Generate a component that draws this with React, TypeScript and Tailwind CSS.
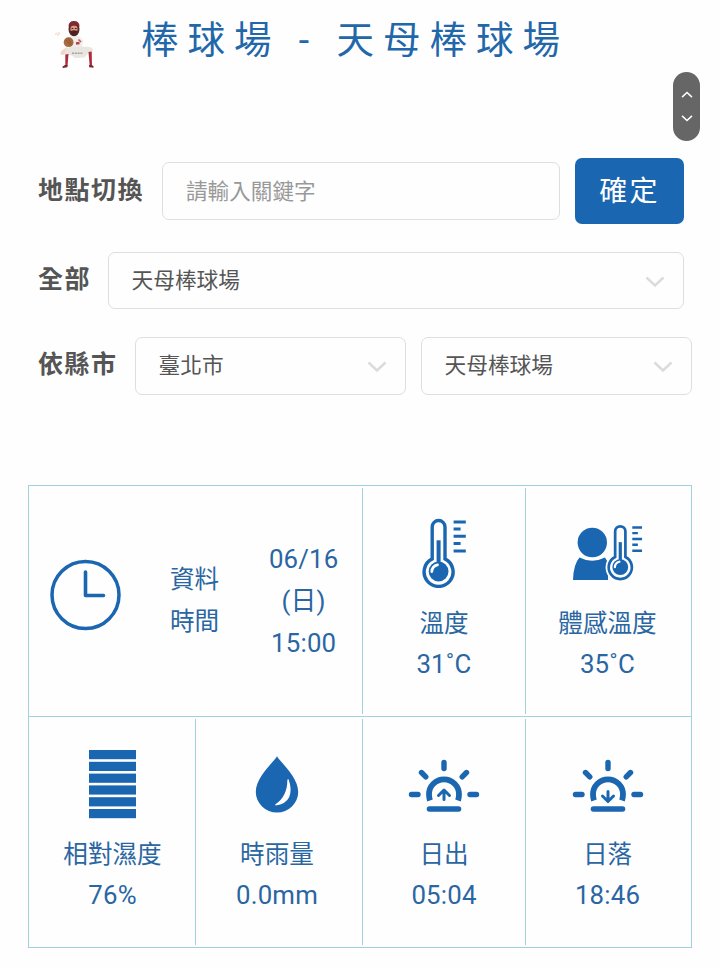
import clsx from "clsx";
import type { ReactNode } from "react";

const BLUE = "#1b66b1";

function Player() {
  return (
    <svg className="h-[52px] w-[44px]" viewBox="0 0 44 52">
      <path d="M1 15.500l2-1.500M4 13l2 2M3 16l2-.5" stroke="#f3dccb" strokeWidth="1.300" />
      <path d="M12.500 28l-5.500 4.500-.5 3 2.500.5 5-3z" fill="#f6d3c4" />
      <path d="M16 17.500l8-.5 3.500 4 .5 7-3 3H15.500l-1-6z" fill="#f0edea" />
      <path d="M24 18l3.500 4-.5 3.500-4 .5" fill="none" stroke="#efece9" strokeWidth="3" />
      <path d="M22 24.500l3.500-.5" stroke="#b4404a" strokeWidth="2.600" />
      <path d="M24.500 20.500l2.500 2.500" stroke="#c15a61" strokeWidth="1.600" />
      <path d="M12 29l10-1.500L36 28q3 1 3 4l-4.500 2-4 4.500-9 .5-5-3-5 .8q-1-4 .5-7.800z" fill="#e9e6e1" />
      <path d="M11.300 35.500l3.200-.5-1 12h-2.200zM34.500 33l3.200-.5.3 14.500h-2.300z" fill="#ad2b3b" />
      <path d="M10.800 46l3 .2-.5 2-4.500.8-.4-1.300zM35 46l3 0 1.700 1.400-.3 1.300-4.200-.5z" fill="#7b2833" />
      <path d="M18 34.200h11" stroke="#a5a09d" strokeWidth="1.600" strokeDasharray="2 .8" />
      <ellipse cx="20" cy="10" rx="5.500" ry="7.300" fill="#5e2826" />
      <ellipse cx="20" cy="10" rx="3.600" ry="3.400" fill="#dd9a80" />
      <path d="M14.500 7.500q0-5.500 5.500-5.500t5.500 5.500q-5.500-2.500-11 0" fill="#7e2c31" />
      <path d="M16.500 12q3.500-1.500 7 0l-1 4-2.500 1-2.500-1z" fill="#4a2422" />
      <path d="M17.500 9.500h1.800M20.900 9.500h1.800" stroke="#4a2422" strokeWidth="1" />
      <circle cx="14.600" cy="23.200" r="4.900" fill="#a76b3f" />
      <path d="M11.500 20.500l5.500 6M14 19l3.500 6" stroke="#855432" strokeWidth=".9" />
    </svg>
  );
}

function Chevron({ up, className }: { up?: boolean; className?: string }) {
  return (
    <svg className={className} viewBox="0 0 20 12" fill="none" stroke="currentColor">
      <path d={up ? "M1.5 10.5l8.5-8 8.5 8" : "M1.5 1.5l8.5 8 8.5-8"} strokeWidth="2.6" />
    </svg>
  );
}

function Select({ value, className }: { value: string; className?: string }) {
  return (
    <button
      className={clsx(
        "flex items-center justify-between rounded-[7px] border border-[#dedede] pr-[18px] pl-[22.5px] text-[21.7px] text-[#555]",
        className,
      )}
    >
      <span>{value}</span>
      <Chevron className="mt-[2px] h-[12px] w-[20px] text-[#dcdcdc]" />
    </button>
  );
}

function ClockIcon() {
  return (
    <svg className="size-[72px]" viewBox="0 0 72 72" fill="none" stroke={BLUE} strokeLinecap="round" strokeLinejoin="round">
      <circle cx="36.5" cy="36" r="33.5" strokeWidth="3.5" />
      <path d="M36.5 13v23.5h18" strokeWidth="3.6" />
    </svg>
  );
}

function Thermometer() {
  return (
    <>
      <path d="M10.2 40.9V8.9a6.4 6.4 0 0 1 12.8 0v32a14.5 14.5 0 1 1-12.8 0z" fill="none" stroke={BLUE} strokeWidth="3.4" />
      <circle cx="16.600" cy="53.500" r="9.900" fill={BLUE} />
      <path d="M16.600 22.300v24" stroke={BLUE} strokeWidth="4" />
      <path d="M9.800 53.500a7.400 7.400 0 0 1 5.700-6.700" fill="none" stroke="#fff" strokeWidth="2.800" strokeLinecap="round" />
      <path d="M31.600 4h12.200M31.600 11h7M31.600 18.300h12.200M31.600 25.500h7M31.600 33h12.200" stroke={BLUE} strokeWidth="3" />
    </>
  );
}

function TemperatureIcon() {
  return (
    <svg className="h-[70px] w-[44px]" viewBox="0 0 44 70">
      <Thermometer />
    </svg>
  );
}

function FeelsLikeIcon() {
  return (
    <svg className="h-[70px] w-[70px]" viewBox="0 0 70 70">
      <circle cx="19.3" cy="24.5" r="14.7" fill={BLUE} />
      <path d="M6.5 39.500q12.500 6.500 25.500 0l3 5v17.500H0Q.5 46 6.500 39.500z" fill={BLUE} />
      <g transform="translate(34 6.300) scale(.8)">
        <circle cx="16.600" cy="53.900" r="18.400" fill="#fefefe" />
        <Thermometer />
      </g>
    </svg>
  );
}

function HumidityIcon() {
  return (
    <svg className="h-[70px] w-[47px]" viewBox="0 0 47 70" fill={BLUE}>
      {[0, 1, 2, 3, 4, 5].map((i) => (
        <rect key={i} y={1 + i * 11.8} width="47" height="9.2" />
      ))}
    </svg>
  );
}

function RainIcon() {
  return (
    <svg className="h-[70px] w-[44px]" viewBox="0 0 44 70">
      <path d="M22 7.200C18 14 .8 28 .8 43a21.200 20.500 0 0 0 42.400 0C43.200 28 26 14 22 7.200z" fill={BLUE} />
      <path d="M33 30.500q7.500 22-12.500 25.500 12.500-8 12.500-25.500z" fill="#fff" stroke="#fff" strokeWidth="1.200" />
    </svg>
  );
}

function SunIcon({ down }: { down?: boolean }) {
  return (
    <svg className="h-[70px] w-[72px]" viewBox="0 0 72 70" fill="none" stroke={BLUE} strokeLinecap="round" strokeLinejoin="round">
      <path d="M36 13.500v6M13.500 23.500l4.300 4.300M58.500 23.500l-4.300 4.300M3.500 45.500h6.500M62 45.500h6.500M21.400 60h29.200" strokeWidth="5.400" />
      <path d="M22 51.500Q21 48.500 21 45.300a15 15 0 0 1 30 0Q51 48.500 50 51.500" strokeWidth="5.800" strokeLinecap="butt" />
      <path
        d={down ? "M36 42.500v9.500M30.500 47l5.500 5.500 5.500-5.500" : "M36 50.500v-9M30.500 46.500l5.500-5.500 5.500 5.500"}
        strokeWidth="3"
      />
    </svg>
  );
}

function Reading({ icon, label, value, className }: { icon: ReactNode; label: string; value: string; className?: string }) {
  return (
    <div className={clsx("my-[2px] flex flex-col items-center border-[#a2d1db] pt-[30px]", className)}>
      {icon}
      <span className="mt-[15px] text-[24.6px] leading-[42px]">{label}</span>
      <span className="-mt-[2px] text-[25.8px] leading-[42px] tracking-[0.2px]">{value}</span>
    </div>
  );
}

export default function App() {
  return (
    <main className="relative h-[967px] w-[720px] overflow-hidden bg-[#fefefe] font-[Roboto,'Noto_Sans_CJK_TC',sans-serif] text-[#555]">
      <header className="flex h-[80px] items-start pl-[54px]">
        <div className="mt-[19px] w-[87px]">
          <Player />
        </div>
        <h1 className="mt-[13px] text-[37.5px] leading-[54px] tracking-[9px] whitespace-nowrap text-[#2267a9]">
          棒球場 - 天母棒球場
        </h1>
      </header>

      <div className="absolute top-[72px] left-[673px] flex h-[69px] w-[27px] flex-col items-center justify-center gap-[17px] rounded-full bg-[#666] text-white">
        <Chevron up className="h-[7px] w-[12px]" />
        <Chevron className="h-[7px] w-[12px]" />
      </div>

      <form className="pt-[78px] pl-[38px]">
        <div className="flex h-[66px] items-center">
          <label className="-mt-px w-[124px] text-[25px] font-bold tracking-[1.5px] whitespace-nowrap">地點切換</label>
          <input
            className="h-[58px] w-[398px] rounded-[7px] border border-[#dedede] pt-px pl-[23px] text-[21.6px] placeholder:text-[#999]"
            placeholder="請輸入關鍵字"
          />
          <button
            type="button"
            className="ml-[15px] h-[66px] w-[109px] rounded-[7px] bg-[#1b66b1] pt-[2px] text-[28px] tracking-[2.3px] text-white"
          >
            確定
          </button>
        </div>

        <div className="mt-[28px] flex h-[57px] items-center">
          <label className="-mt-[2px] w-[70px] text-[25px] font-bold tracking-[1.5px] whitespace-nowrap">全部</label>
          <Select value="天母棒球場" className="h-[57px] w-[576px] pt-px" />
        </div>

        <div className="mt-[28px] flex h-[58px] items-center">
          <label className="-mt-[2px] w-[97px] text-[25px] font-bold tracking-[1.5px] whitespace-nowrap">依縣市</label>
          <Select value="臺北市" className="h-[58px] w-[271px]" />
          <Select value="天母棒球場" className="ml-[15px] h-[58px] w-[271px]" />
        </div>
      </form>

      <section className="mt-[90px] ml-[28px] h-[463px] w-[664px] border border-[#a2d1db] text-[#2a66a2]">
        <div className="grid h-[231px] grid-cols-[334px_163px_165px] border-b border-[#a2d1db]">
          <div className="my-[2px] flex items-center border-r border-[#a2d1db] pl-[20px]">
            <div className="-mt-[12px]">
              <ClockIcon />
            </div>
            <div className="ml-[49px] flex flex-col text-[24.6px] leading-[42px]">
              <span>資料</span>
              <span>時間</span>
            </div>
            <div className="ml-[44px] flex w-[81px] flex-col text-center text-[25.8px] leading-[42px] tracking-[0.2px]">
              <span>06/16</span>
              <span>(日)</span>
              <span>15:00</span>
            </div>
          </div>
          <Reading icon={<TemperatureIcon />} label="溫度" value="31˚C" className="border-r" />
          <Reading icon={<FeelsLikeIcon />} label="體感溫度" value="35˚C" className="pr-[2px]" />
        </div>
        <div className="grid h-[230px] grid-cols-[167px_167px_163px_165px]">
          <Reading icon={<HumidityIcon />} label="相對濕度" value="76%" className="border-r pl-px" />
          <Reading icon={<RainIcon />} label="時雨量" value="0.0mm" className="border-r pr-[4px]" />
          <Reading icon={<SunIcon />} label="日出" value="05:04" className="border-r" />
          <Reading icon={<SunIcon down />} label="日落" value="18:46" className="pr-[2px]" />
        </div>
      </section>
    </main>
  );
}
